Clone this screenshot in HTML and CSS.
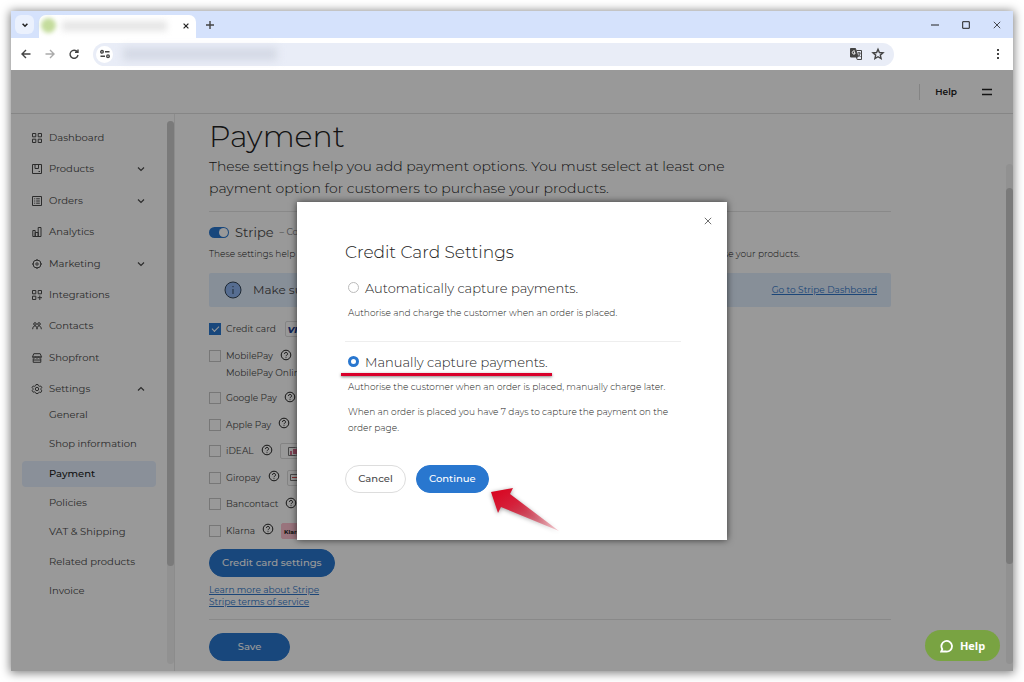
FILE: index.html
```html
<!DOCTYPE html>
<html lang="en">
<head>
<meta charset="utf-8">
<meta name="viewport" content="width=device-width, initial-scale=1">
<title>Payment settings</title>
<link rel="stylesheet" href="styles.css">
</head>
<body>
<svg class="defs" aria-hidden="true">
  <symbol id="down" viewBox="0 0 10 10"><path d="M2 3.5l3 3 3-3"/></symbol>
  <symbol id="up" viewBox="0 0 10 10"><path d="M2 6.5l3-3 3 3"/></symbol>
  <symbol id="cross" viewBox="0 0 10 10"><path d="M1 1l8 8M9 1l-8 8"/></symbol>
  <symbol id="help" viewBox="0 0 12 12"><circle cx="6" cy="6" r="4.8"/><path d="M4.5 4.9a1.5 1.5 0 1 1 2.2 1.3c-.5.3-.7.5-.7 1M6 8.3v.8"/></symbol>
</svg>
<div class="window">
  <div class="tabstrip">
    <button class="tab-search" aria-label="Search tabs"><svg class="ico s8"><use href="#down"/></svg></button>
    <div class="tab"><span class="favicon"></span><span class="tab-title"></span><button class="tab-close" aria-label="Close tab"><svg class="ico s6"><use href="#cross"/></svg></button></div>
    <button class="new-tab" aria-label="New tab"><svg class="ico s8" viewBox="0 0 8 8"><path d="M4 0v8M0 4h8"/></svg></button>
    <div class="window-buttons">
      <button aria-label="Minimize"><svg class="ico s8" viewBox="0 0 8 8"><path d="M0 4h8"/></svg></button>
      <button aria-label="Maximize"><svg class="ico s8" viewBox="0 0 8 8"><path d="M.7.7h6.6v6.6H.7z"/></svg></button>
      <button aria-label="Close"><svg class="ico s8"><use href="#cross"/></svg></button>
    </div>
  </div>
  <div class="toolbar">
    <button aria-label="Back"><svg class="ico s10" viewBox="0 0 10 10"><path d="M9.5 5H1.2M5 1L1 5l4 4"/></svg></button>
    <button class="dim" aria-label="Forward"><svg class="ico s10" viewBox="0 0 10 10"><path d="M.5 5h8.3M5 1l4 4-4 4"/></svg></button>
    <button aria-label="Reload"><svg class="ico s10" viewBox="0 0 10 10"><path d="M8.4 3A4 4 0 1 0 9 6M9 .5V3.4H6"/></svg></button>
    <div class="address">
      <span class="site"><svg class="ico s10" viewBox="0 0 10 10"><circle cx="2" cy="2.8" r="1.3"/><path d="M5 2.8h4.5M.5 7.2H5"/><circle cx="8" cy="7.2" r="1.3"/></svg></span>
      <span class="url"></span>
      <button class="translate" aria-label="Translate"><svg class="ico s12" viewBox="0 0 12 12"><path class="solid" d="M.5.5h5L8 9H.5z"/><path class="light" d="M5 3.3a1.6 1.6 0 1 0 0 2.4V4.7H4"/><path class="thin" d="M6.5 2.5h5v9H7.2L6.3 9M7.5 5h3M9 4v1M8 8.5C9.5 7.500 10 6 10 5M8.300 6.500L10.500 9"/></svg></button>
      <button aria-label="Bookmark"><svg class="ico s12" viewBox="0 0 12 12"><path d="M6 1.200l1.400 3.300 3.600.3-2.700 2.300.8 3.500L6 8.700l-3.100 1.900.8-3.500L1 4.800l3.600-.3z"/></svg></button>
    </div>
    <button class="menu-dots" aria-label="Browser menu"><svg class="ico s10" viewBox="0 0 10 10"><path class="dots" d="M4 0h2v2H4zM4 4h2v2H4zM4 8h2v2H4z"/></svg></button>
  </div>

  <div class="page">
    <header class="topbar">
      <a class="top-help" href="#">Help</a>
      <button class="burger" aria-label="Menu"><svg class="ico s10" viewBox="0 0 10 10"><path d="M0 2.500h10M0 7.500h10"/></svg></button>
    </header>
    <div class="columns">
      <aside class="sidebar">
        <nav class="nav">
          <ul class="nav-main">
            <li><a href="#"><svg class="ico s10" viewBox="0 0 10 10"><path d="M.5.5h3.300v3.300H.5zM6.200.5h3.300v3.300H6.200zM.5 6.200h3.300v3.300H.5zM6.200 6.200h3.300v3.300H6.200z"/></svg>Dashboard</a></li>
            <li><a href="#"><svg class="ico s10" viewBox="0 0 10 10"><path d="M.5.5h9v9h-9zM3 .5v4h3.500v-4M6.500 7.500h1.500"/></svg>Products<svg class="ico s10 chev"><use href="#down"/></svg></a></li>
            <li><a href="#"><svg class="ico s10" viewBox="0 0 10 10"><path d="M.5.5h9v9h-9zM2.200 2.800h1M4.200 2.800h3.600M2.200 5h1M4.200 5h3.600M2.200 7.200h1M4.200 7.200h3.600"/></svg>Orders<svg class="ico s10 chev"><use href="#down"/></svg></a></li>
            <li><a href="#"><svg class="ico s10" viewBox="0 0 10 10"><path d="M.8 9.500V3.500h2.400v6M3.200 9.500V5.500h3v4M6.200 9.500V.5h2.800v9zM.8 9.500h8.200"/></svg>Analytics</a></li>
            <li><a href="#"><svg class="ico s10" viewBox="0 0 10 10"><circle cx="5" cy="5" r="4"/><circle cx="5" cy="5" r="1.200"/><path d="M5 0v2M5 8v2M0 5h2M8 5h2"/></svg>Marketing<svg class="ico s10 chev"><use href="#down"/></svg></a></li>
            <li><a href="#"><svg class="ico s10" viewBox="0 0 10 10"><path d="M.5.5h3.300v3.300H.5zM6.200.5h3.300v3.300H6.200zM.5 6.200h3.300v3.300H.5zM7.800 5.500v4.500M5.600 7.700H10"/></svg>Integrations</a></li>
            <li><a href="#"><svg class="ico s10" viewBox="0 0 10 10"><circle cx="3" cy="3" r="1.300"/><circle cx="7" cy="3" r="1.300"/><path d="M.7 8.200c0-2 .8-3.300 2.300-3.300S5 6.200 5 8.200c0-2 .7-3.300 2-3.300s2.300 1.300 2.300 3.300"/></svg>Contacts</a></li>
            <li><a href="#"><svg class="ico s10" viewBox="0 0 10 10"><path d="M1.800.7h6.400L9.500 3.800h-9zM.5 3.800c0 1.700 3 1.700 3 0 0 1.700 3 1.700 3 0 0 1.700 3 1.700 3 0M1.200 5.500v3.800h7.600V5.500M1.200 7h7.600"/></svg>Shopfront</a></li>
            <li><a href="#"><svg class="ico s10" viewBox="0 0 10 10"><path d="M4 .5h2l.4 1.200 1.200.6 1.200-.3 1 1.700-.9 1 .1 1.200.8.9-1 1.700-1.200-.3-1.200.6L6 9.500H4l-.4-1-1.200-.6-1.200.3-1-1.700.8-.9-.1-1.200-.8-1L1.200 2l1.200.3 1.200-.6z"/><circle cx="5" cy="5" r="1.700"/></svg>Settings<svg class="ico s10 chev"><use href="#up"/></svg></a></li>
          </ul>
          <ul class="nav-sub">
            <li><a href="#">General</a></li>
            <li><a href="#">Shop information</a></li>
            <li><a class="active" href="#" aria-current="page">Payment</a></li>
            <li><a href="#">Policies</a></li>
            <li><a href="#">VAT &amp; Shipping</a></li>
            <li><a href="#">Related products</a></li>
            <li><a href="#">Invoice</a></li>
          </ul>
        </nav>
        <div class="track side-track"><div class="thumb"></div></div>
      </aside>
      <main class="content">
        <div class="settings">
          <h1>Payment</h1>
          <p class="lead">These settings help you add payment options. You must select at least one payment option for customers to purchase your products.</p>
          <section class="stripe">
            <label class="provider"><input class="switch" type="checkbox" checked><span>Stripe</span><small>– Connected</small></label>
            <p class="note">These settings help you add payment options. You must select at least one payment option for customers to purchase your products.</p>
            <div class="banner">
              <svg class="info" viewBox="0 0 18 18"><circle cx="9" cy="9" r="8"/><path d="M9 8v5M9 5v1.200"/></svg>
              <span>Make sure</span>
              <a href="#">Go to Stripe Dashboard</a>
            </div>
            <div class="methods">
              <div class="method"><label><input type="checkbox" checked>Credit card</label><span class="brand visa">VISA</span></div>
              <div class="method paired"><label><input type="checkbox">MobilePay</label><svg class="ico s12 q"><use href="#help"/></svg></div>
              <p class="sub">MobilePay Online</p>
              <div class="method-list">
                <div class="method"><label><input type="checkbox">Google Pay</label><svg class="ico s12 q"><use href="#help"/></svg></div>
                <div class="method"><label><input type="checkbox">Apple Pay</label><svg class="ico s12 q"><use href="#help"/></svg></div>
                <div class="method"><label><input type="checkbox">iDEAL</label><svg class="ico s12 q"><use href="#help"/></svg><span class="brand"><svg class="ideal" viewBox="0 0 12 9"><path class="frame" d="M.5.5h7q4 0 4 4t-4 4h-7z"/><path class="fill" d="M2 4h2v4H2zM5 2h4v5H5z"/></svg></span></div>
                <div class="method"><label><input type="checkbox">Giropay</label><svg class="ico s12 q"><use href="#help"/></svg><span class="brand"><svg class="giro" viewBox="0 0 22 7"><path class="frame" d="M.5.5h21v6H.5z"/><path class="line" d="M2 3.500h18"/></svg></span></div>
                <div class="method"><label><input type="checkbox">Bancontact</label><svg class="ico s12 q"><use href="#help"/></svg></div>
                <div class="method"><label><input type="checkbox">Klarna</label><svg class="ico s12 q"><use href="#help"/></svg><span class="brand klarna">Klarna.</span></div>
              </div>
            </div>
            <button class="pill primary">Credit card settings</button>
            <div class="links"><a href="#">Learn more about Stripe</a><a href="#">Stripe terms of service</a></div>
          </section>
          <button class="pill primary save">Save</button>
        </div>
      </main>
      <div class="track page-track"><div class="thumb"></div></div>
    </div>

    <div class="overlay">
      <div class="modal" role="dialog" aria-labelledby="dialog-title">
        <button class="modal-close" aria-label="Close"><svg class="ico s8"><use href="#cross"/></svg></button>
        <h2 id="dialog-title">Credit Card Settings</h2>
        <div class="option">
          <label><input type="radio" name="capture">Automatically capture payments.</label>
          <p>Authorise and charge the customer when an order is placed.</p>
        </div>
        <div class="option">
          <label><input type="radio" name="capture" checked>Manually capture payments.<span class="underline"></span></label>
          <p>Authorise the customer when an order is placed, manually charge later.</p>
          <p>When an order is placed you have 7 days to capture the payment on the order page.</p>
        </div>
        <div class="actions">
          <button class="pill">Cancel</button>
          <button class="pill primary">Continue<svg class="pointer" viewBox="0 0 72 46"><defs><linearGradient id="fade" x1="0" y1="0" x2="1" y2="1"><stop offset="0" stop-color="#d9001b"/><stop offset=".35" stop-color="#d5203a"/><stop offset="1" stop-color="#d5203a" stop-opacity=".2"/></linearGradient></defs><path fill="url(#fade)" d="M0 4L22 0l-3 6 49 37-58-24-3 6z"/></svg></button>
        </div>
      </div>
    </div>
    <button class="chat"><svg viewBox="0 0 14 14"><path d="M2.300 10.200A5.300 5.300 0 1 1 6 12.500H1.200z"/></svg>Help</button>
  </div>
</div>
</body>
</html>
```
FILE: styles.css
```css
* { box-sizing: border-box; }
body { margin: 0; min-height: 100vh; padding: 11px; display: flex; background: #fff; color: #4a4a4a; font: 10px/16px Montserrat, Inter, "Open Sans", sans-serif; }
h1, h2, p, ul { margin: 0; padding: 0; font-weight: 400; }
ul { list-style: none; }
button { font: inherit; color: inherit; border: 0; background: none; padding: 0; cursor: pointer; }
a { color: inherit; text-decoration: none; }
input { appearance: none; margin: 0; flex: none; }
.defs { position: absolute; width: 0; height: 0; }
.ico { flex: none; display: block; fill: none; stroke: currentColor; stroke-width: 1; overflow: visible; }
.ico .solid { fill: currentColor; }
.ico .light { stroke: #fff; }
.ico .dots { fill: currentColor; stroke: none; }
.s6 { width: 6px; height: 6px; }
.s8 { width: 8px; height: 8px; }
.s10 { width: 10px; height: 10px; }
.s12 { width: 12px; height: 12px; }
.window { flex: 1; min-width: 0; display: flex; flex-direction: column; box-shadow: 0 1px 9px 1px rgba(0, 0, 0, .5); background: #fff; }

.tabstrip { display: flex; align-items: center; height: 27px; padding-left: 4px; background: #d5e2fc; color: #222; }
.tabstrip .ico, .toolbar .ico { stroke-width: 1.4; }
.tab-search { display: grid; place-items: center; width: 19px; height: 19px; border-radius: 6px; background: #ebf1fd; }
.tab-search .ico, .tab-close .ico { stroke-width: 2; }
.tab { display: flex; align-items: center; align-self: flex-end; width: 157px; height: 23px; margin-left: 5px; padding: 0 7px 2px 2px; border-radius: 7px 7px 0 0; background: #fff; }
.favicon { width: 15px; height: 15px; border-radius: 50%; background: #c4dc9c; filter: blur(2px); }
.tab-title { flex: 1; height: 10px; margin: 0 16px 0 6px; background: #e6e6e6; filter: blur(3px); }
.new-tab { margin-left: 10px; color: #444; }
.window-buttons { display: flex; gap: 23px; margin-left: auto; padding-right: 12px; }
.tabstrip .window-buttons .ico { stroke-width: 1; }
.toolbar { display: flex; align-items: center; height: 32px; padding: 0 10px; gap: 14px; border-radius: 5px 5px 0 0; background: #fff; color: #444; }
.toolbar .dim { color: #aaa; }
.address { display: flex; align-items: center; flex: 1; height: 23px; margin-right: 85px; padding: 0 10px 0 3px; gap: 10px; border-radius: 12px; background: #e9edf7; }
.site { display: grid; place-items: center; width: 17px; height: 17px; border-radius: 50%; background: #fff; }
.url { width: 154px; height: 12px; background: #d3d8e4; filter: blur(4px); }
.translate { margin-left: auto; }
.translate .ico, .translate .ico .thin { stroke-width: 1; }

.page { position: relative; flex: 1; display: flex; flex-direction: column; background: #fff; }
.topbar { display: flex; align-items: center; justify-content: flex-end; height: 44px; padding-right: 21px; gap: 25px; border-bottom: 1px solid #e0e0e0; color: #222; font-size: 9px; font-weight: 600; }
.top-help { padding-left: 15px; border-left: 1px solid #ddd; }
.burger .ico { stroke-width: 1.5; }
.columns { flex: 1; display: flex; }
.sidebar { display: flex; width: 164px; border-right: 1px solid #eaeaea; }
.nav { flex: 1; padding: 13px 11px 0 11px; }
.nav-main { display: flex; flex-direction: column; justify-content: space-between; height: 273px; }
.nav-main a { display: flex; align-items: center; height: 22px; padding: 0 10px; gap: 7px; }
.nav-main .chev { margin-left: auto; stroke-width: 1.2; }
.nav-sub { display: flex; flex-direction: column; justify-content: space-between; height: 202px; margin-top: 2px; }
.nav-sub a { display: flex; align-items: center; height: 26px; padding-left: 27px; border-radius: 4px; }
.nav-sub .active { background: #e6f1ff; color: #222; font-weight: 500; }
.track { width: 7px; border-radius: 4px; background: #f2f2f2; }
.thumb { border-radius: 4px; background: #cbcbcb; }
.side-track { margin: 7px 0; }
.side-track .thumb { height: 82%; }
.page-track { margin: 50px 0 7px; padding-top: 24px; }
.page-track .thumb { height: 79%; }

.content { flex: 1; min-width: 0; padding: 4px 0 8px 34px; }
.settings { max-width: 682px; }
h1 { color: #222; font-size: 30px; font-weight: 300; line-height: 37px; }
.lead { max-width: 540px; font-size: 14px; font-weight: 300; line-height: 22px; color: #222; }
.stripe { margin-top: 12px; padding: 11px 0; border-top: 1px solid #e4e4e4; border-bottom: 1px solid #e4e4e4; }
.provider { display: flex; align-items: center; gap: 6px; height: 18px; font-size: 13px; }
.provider small { color: #777; font-size: 9px; }
.switch { display: flex; align-items: center; justify-content: flex-end; width: 20px; height: 11px; padding: 1px; border-radius: 6px; background: #2977cf; }
.switch::before { content: ""; width: 9px; height: 9px; border-radius: 50%; background: #fff; }
.note { padding: 5px 0 11px; font-size: 9px; font-weight: 300; color: #222; }
.banner { display: flex; align-items: center; height: 34px; padding: 0 14px 0 15px; gap: 11px; border-radius: 2px; background: #e2eefe; font-size: 12px; }
.banner a, .links a { color: #2f76c8; text-decoration: underline; font-size: 9px; }
.banner a { margin-left: auto; }
.info { width: 18px; height: 18px; fill: #8fb6f2; stroke: #345; stroke-width: 1; }
.methods { display: flex; flex-direction: column; padding: 13px 0 9px; font-size: 9px; }
.method { display: flex; align-items: center; gap: 7px; height: 18px; }
.method label { display: flex; align-items: center; gap: 5px; }
.method.paired { margin-top: 9px; }
.method input { display: grid; place-items: center; width: 12px; height: 12px; border: 1px solid #c6c6c6; }
.method input:checked { border-color: #2977cf; background: #2977cf; }
.method input:checked::before { content: ""; width: 6px; height: 3px; margin-bottom: 2px; border: solid #fff; border-width: 0 0 1px 1px; rotate: -45deg; }
.method .q { margin-bottom: 3px; color: #222; }
.sub { height: 16px; margin-bottom: 8px; padding-left: 17px; }
.method-list { display: flex; flex-direction: column; justify-content: space-between; height: 151px; }
.brand { display: grid; place-items: center; width: 28px; height: 16px; border: 1px solid #ddd; border-radius: 2px; color: #1c3f94; font-size: 9px; }
.visa { margin-left: 2px; font-weight: 800; font-style: italic; }
.ideal { width: 12px; height: 9px; }
.giro { width: 22px; height: 7px; }
.frame { fill: none; stroke: #777; }
.fill { fill: #d6718e; }
.line { stroke: #e04b4b; }
.klarna { border-color: #ffc2d0; background: #ffc2d0; color: #222; font-size: 6px; font-weight: 700; }
.pill { min-width: 61px; height: 28px; padding: 0 12px; border: 1px solid #ddd; border-radius: 14px; font-weight: 500; }
.pill.primary { border-color: #2977cf; background: #2977cf; color: #fff; }
.links { display: flex; flex-direction: column; align-items: flex-start; padding-top: 7px; line-height: 12px; }
.save { width: 81px; margin-top: 13px; }

.overlay { position: absolute; inset: 0; display: grid; place-items: center; background: rgba(0, 0, 0, .4); }
.modal { position: relative; width: 430px; max-width: 100%; padding: 38px 46px 47px 48px; background: #fff; box-shadow: 0 0 7px rgba(0, 0, 0, .65); }
.modal-close { position: absolute; top: 15px; right: 15px; }
h2 { font-size: 17px; font-weight: 300; line-height: 24px; color: #222; }
.option { padding: 14px 3px 20px; color: #222; font-weight: 300; }
.option + .option { padding-top: 10px; padding-bottom: 29px; border-top: 1px solid #eee; }
.option label { position: relative; display: flex; align-items: center; width: fit-content; height: 20px; gap: 6px; font-size: 13px; }
.option p { padding-top: 7px; font-size: 9px; font-weight: 300; }
.option p + p { padding-top: 9px; }
.option input { width: 11px; height: 11px; border: 1px solid #bbb; border-radius: 50%; }
.option input:checked { border: 3px solid #2977cf; }
.underline { position: absolute; left: -7px; right: -4px; bottom: -4px; height: 3px; background: #d9002b; box-shadow: 0 1px 3px rgba(0, 0, 0, .5); }
.actions { display: flex; gap: 10px; }
.actions .primary { position: relative; }
.pointer { position: absolute; left: 74px; top: 22px; width: 72px; height: 46px; filter: drop-shadow(0 1px 2px rgba(0, 0, 0, .4)); }
.chat { position: absolute; right: 13px; bottom: 10px; display: flex; align-items: center; justify-content: center; gap: 6px; width: 75px; height: 31px; border-radius: 16px; background: #79a342; color: #fff; font: 700 11px/16px "Open Sans", sans-serif; }
.chat svg { width: 14px; height: 14px; fill: none; stroke: #fff; stroke-width: 1.8; }
```
